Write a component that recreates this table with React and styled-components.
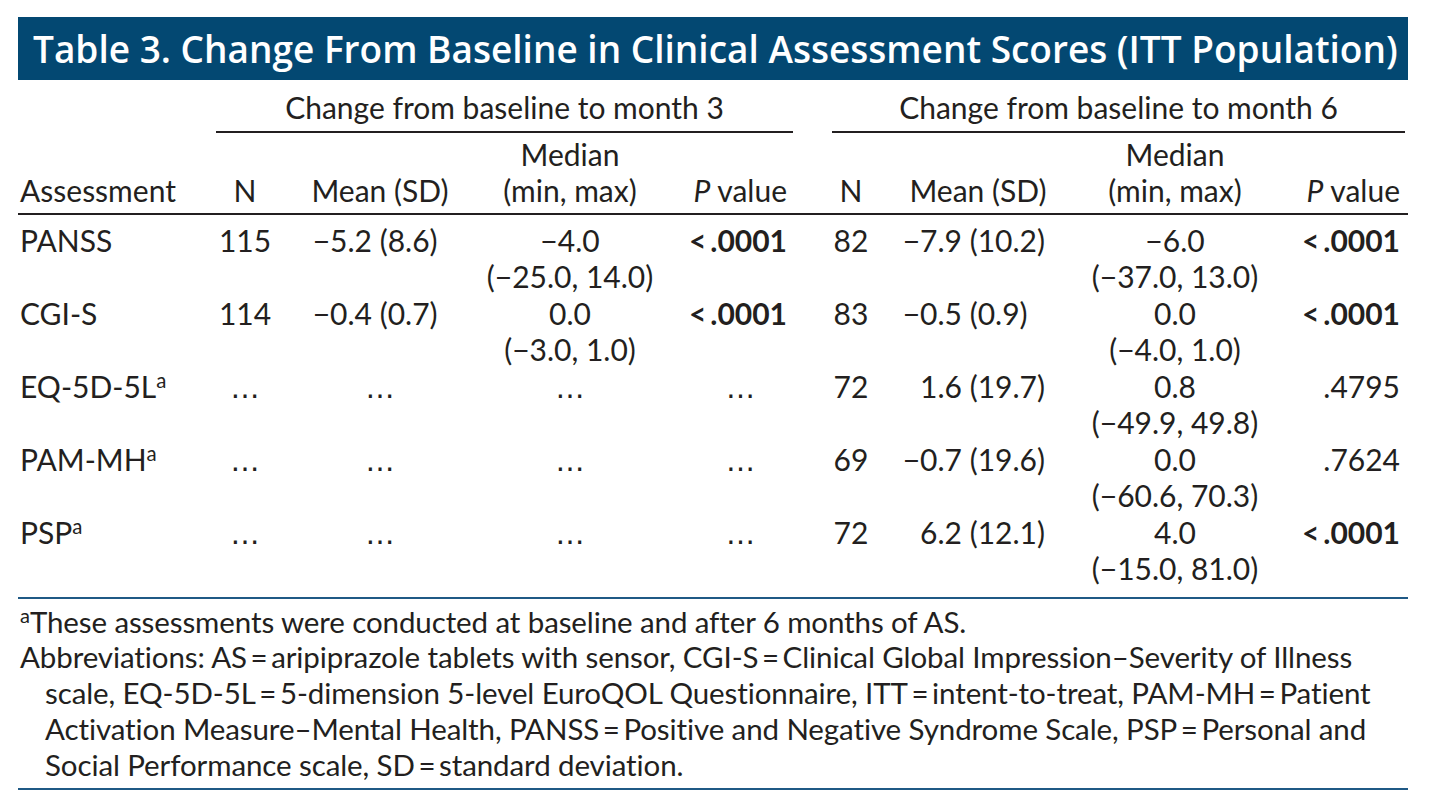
import React from 'react';
import styled, { createGlobalStyle } from 'styled-components';

const GlobalStyle = createGlobalStyle`
  body {
    margin: 0;
    background: #ffffff;
    font-family: Lato, "Liberation Sans", sans-serif;
    color: #231f20;
  }
`;

const Page = styled.div`
  width: 1390px;
  padding: 17px 23px 0 18px;
`;

const TitleBar = styled.h1`
  margin: 0;
  height: 63px;
  display: flex;
  align-items: center;
  padding-left: 15px;
  background: #034872;
  color: #ffffff;
  font-family: "Open Sans", Lato, sans-serif;
  font-size: 37px;
  font-weight: 600;
  letter-spacing: 0;
  white-space: nowrap;
`;

const Table = styled.table`
  width: 1390px;
  table-layout: fixed;
  border-collapse: collapse;
  font-size: 30px;
  line-height: 36.5px;
`;

const GroupHead = styled.th`
  padding: 9px 0 0;
  font-weight: 400;
  vertical-align: bottom;
`;

const GroupLabel = styled.div`
  margin: 0 ${(p) => p.$mr}px 0 ${(p) => p.$ml}px;
  padding-bottom: 5px;
  border-bottom: 2px solid #231f20;
  text-align: center;
`;

const HeadRow = styled.tr`
  border-bottom: 2px solid #231f20;
`;

const HeadCell = styled.th`
  font-weight: 400;
  vertical-align: bottom;
  text-align: ${(p) => p.$align || 'center'};
  padding: 3px ${(p) => p.$pr || 0}px 4px ${(p) => p.$pl || 0}px;
  white-space: nowrap;
`;

const BodyRow = styled.tr`
  vertical-align: top;
  & > td {
    padding-top: ${(p) => (p.$first ? 7 : 0)}px;
    padding-bottom: ${(p) => (p.$last ? 10 : 0)}px;
  }
`;

const Cell = styled.td`
  text-align: ${(p) => p.$align || 'center'};
  padding-left: ${(p) => p.$pl || 0}px !important;
  padding-right: ${(p) => p.$pr || 0}px !important;
  font-weight: ${(p) => (p.$bold ? 700 : 400)};
  white-space: nowrap;
`;

const FirstNum = styled.span`
  display: inline-block;
  width: 60px;
  text-align: right;
`;

const Dots = styled.span`
  font-family: "DejaVu Sans", sans-serif;
  font-size: 29px;
  line-height: 0;
`;

const Sup = styled.sup`
  font-size: 0.68em;
  line-height: 0;
  vertical-align: 0.5em;
`;

const Italic = styled.i`
  font-style: italic;
`;

const BlueRule = styled.div`
  height: 2px;
  background: #1f5985;
`;

const Notes = styled.div`
  padding: 5px 0 6px;
  font-size: 29.5px;
  line-height: 35.8px;
  letter-spacing: -0.1px;
`;

const Note = styled.p`
  margin: 0;
  padding-left: 27px;
  text-indent: -25px;
  white-space: nowrap;
`;

const rows = [
  {
    name: 'PANSS',
    m3: { n: '115', mean: ['−5.2', ' (8.6)'], med: ['−4.0', '(−25.0, 14.0)'], p: '<\u2009.0001', bold: true },
    m6: { n: '82', mean: ['−7.9', ' (10.2)'], med: ['−6.0', '(−37.0, 13.0)'], p: '<\u2009.0001', bold: true },
  },
  {
    name: 'CGI-S',
    m3: { n: '114', mean: ['−0.4', ' (0.7)'], med: ['0.0', '(−3.0, 1.0)'], p: '<\u2009.0001', bold: true },
    m6: { n: '83', mean: ['−0.5', ' (0.9)'], med: ['0.0', '(−4.0, 1.0)'], p: '<\u2009.0001', bold: true },
  },
  {
    name: 'EQ-5D-5L',
    sup: true,
    m6: { n: '72', mean: ['1.6', ' (19.7)'], med: ['0.8', '(−49.9, 49.8)'], p: '.4795' },
  },
  {
    name: 'PAM-MH',
    sup: true,
    m6: { n: '69', mean: ['−0.7', ' (19.6)'], med: ['0.0', '(−60.6, 70.3)'], p: '.7624' },
  },
  {
    name: 'PSP',
    sup: true,
    m6: { n: '72', mean: ['6.2', ' (12.1)'], med: ['4.0', '(−15.0, 81.0)'], p: '<\u2009.0001', bold: true },
  },
];

const Empty = () => <Dots>{'\u2026'}</Dots>;

const Month3 = ({ d }) =>
  d ? (
    <>
      <Cell>{d.n}</Cell>
      <Cell $align="left" $pl={37}>
        <FirstNum>{d.mean[0]}</FirstNum>
        {d.mean[1]}
      </Cell>
      <Cell>
        {d.med[0]}
        <br />
        {d.med[1]}
      </Cell>
      <Cell $align="right" $pr={8} $bold={d.bold}>
        {d.p}
      </Cell>
    </>
  ) : (
    <>
      <Cell>
        <Empty />
      </Cell>
      <Cell $pl={15}>
        <Empty />
      </Cell>
      <Cell>
        <Empty />
      </Cell>
      <Cell $pl={24} $pr={8}>
        <Empty />
      </Cell>
    </>
  );

const Month6 = ({ d }) => (
  <>
    <Cell $pl={12}>{d.n}</Cell>
    <Cell $align="left" $pl={7}>
      <FirstNum>{d.mean[0]}</FirstNum>
      {d.mean[1]}
    </Cell>
    <Cell>
      {d.med[0]}
      <br />
      {d.med[1]}
    </Cell>
    <Cell $align="right" $pr={8} $bold={d.bold}>
      {d.p}
    </Cell>
  </>
);

const eq = '\u2009=\u2009';

export default function App() {
  return (
    <Page>
      <GlobalStyle />
      <TitleBar>Table 3. Change From Baseline in Clinical Assessment Scores (ITT Population)</TitleBar>
      <Table>
        <colgroup>
          <col style={{ width: 197 }} />
          <col style={{ width: 60 }} />
          <col style={{ width: 195 }} />
          <col style={{ width: 200 }} />
          <col style={{ width: 125 }} />
          <col style={{ width: 100 }} />
          <col style={{ width: 185 }} />
          <col style={{ width: 190 }} />
          <col style={{ width: 138 }} />
        </colgroup>
        <thead>
          <tr>
            <GroupHead />
            <GroupHead colSpan={4}>
              <GroupLabel $ml={1} $mr={2}>Change from baseline to month 3</GroupLabel>
            </GroupHead>
            <GroupHead colSpan={4}>
              <GroupLabel $ml={37} $mr={3}>Change from baseline to month 6</GroupLabel>
            </GroupHead>
          </tr>
          <HeadRow>
            <HeadCell $align="left" $pl={2}>Assessment</HeadCell>
            <HeadCell>N</HeadCell>
            <HeadCell $pl={15}>Mean (SD)</HeadCell>
            <HeadCell>
              Median
              <br />
              (min, max)
            </HeadCell>
            <HeadCell $align="right" $pr={8}>
              <Italic>P</Italic> value
            </HeadCell>
            <HeadCell $pl={12}>N</HeadCell>
            <HeadCell $pr={19}>Mean (SD)</HeadCell>
            <HeadCell>
              Median
              <br />
              (min, max)
            </HeadCell>
            <HeadCell $align="right" $pr={8}>
              <Italic>P</Italic> value
            </HeadCell>
          </HeadRow>
        </thead>
        <tbody>
          {rows.map((r, i) => (
            <BodyRow key={r.name} $first={i === 0} $last={i === rows.length - 1}>
              <Cell $align="left" $pl={2}>
                {r.name}
                {r.sup && <Sup>a</Sup>}
              </Cell>
              <Month3 d={r.m3} />
              <Month6 d={r.m6} />
            </BodyRow>
          ))}
        </tbody>
      </Table>
      <BlueRule />
      <Notes>
        <Note>
          <Sup>a</Sup>These assessments were conducted at baseline and after 6 months of AS.
        </Note>
        <Note>
          Abbreviations: AS{eq}aripiprazole tablets with sensor, CGI-S{eq}Clinical Global Impression–Severity of Illness
          <br />
          scale, EQ-5D-5L{eq}5-dimension 5-level EuroQOL Questionnaire, ITT{eq}intent-to-treat, PAM-MH{eq}Patient
          <br />
          Activation Measure–Mental Health, PANSS{eq}Positive and Negative Syndrome Scale, PSP{eq}Personal and
          <br />
          Social Performance scale, SD{eq}standard deviation.
        </Note>
      </Notes>
      <BlueRule />
    </Page>
  );
}
